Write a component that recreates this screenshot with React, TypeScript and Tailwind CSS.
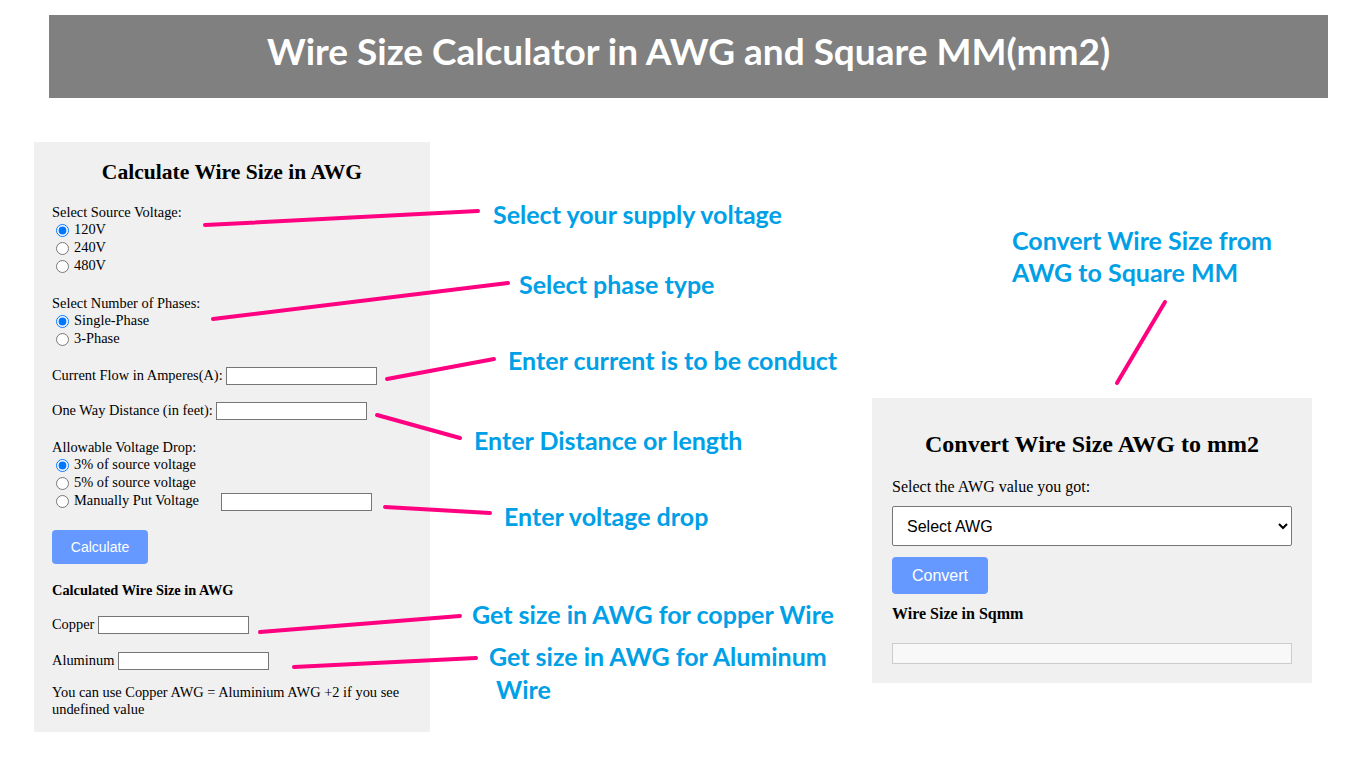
import React from 'react';

const serif = { fontFamily: '"Liberation Serif", "Times New Roman", serif' };

// annotation overlay: pink pointer lines
const pointers: [number, number, number, number][] = [
  [205, 225, 478, 211],
  [213, 319, 508, 283],
  [387, 379, 494, 359],
  [377, 415, 460, 438],
  [385, 507, 490, 513],
  [260, 632, 460, 616],
  [294, 667, 476, 658],
  [1117, 383, 1165, 302],
];

const notes: { text: string; left: number; top: number }[] = [
  { text: 'Select your supply voltage', left: 493, top: 199 },
  { text: 'Select phase type', left: 519, top: 269 },
  { text: 'Enter current is to be conduct', left: 508, top: 345 },
  { text: 'Enter Distance or length', left: 474, top: 425 },
  { text: 'Enter voltage drop', left: 504, top: 501 },
  { text: 'Get size in AWG for copper Wire', left: 472, top: 599 },
  { text: 'Get size in AWG for Aluminum', left: 489, top: 641 },
  { text: 'Wire', left: 496, top: 674 },
  { text: 'Convert Wire Size from', left: 1012, top: 225 },
  { text: 'AWG to Square MM', left: 1012, top: 257 },
];

function Radio({ label, checked, name }: { label: string; checked?: boolean; name: string }) {
  return (
    <label className="flex items-center h-[18px]">
      <input type="radio" name={name} defaultChecked={checked} className="m-0 ml-[4px] mr-[5px] w-[13px] h-[13px]" />
      <span>{label}</span>
    </label>
  );
}

function TextBox({ className = '' }: { className?: string }) {
  return <input type="text" className={`w-[151px] h-[18px] border border-[#767676] bg-white ${className}`} />;
}

export default function App() {
  return (
    <div className="relative w-full h-[768px] bg-white overflow-hidden">
      {/* 标题栏 */}
      <header className="ml-[49px] mt-[15px] w-[1279px] h-[83px] bg-[#808080] flex items-center justify-center pb-[12px]">
        <h1
          className="text-white font-bold text-[37px] leading-none"
          style={{ fontFamily: 'Lato, "Open Sans", sans-serif' }}
        >
          Wire Size Calculator in AWG and Square MM(mm2)
        </h1>
      </header>

      <main className="flex justify-between items-start pl-[34px] pr-[54px] mt-[44px]" style={serif}>
        {/* 左侧：计算 AWG */}
        <section className="w-[396px] bg-[#f0f0f0] pl-[18px] pr-[18px] pt-[18px] pb-[14px] text-[14.4px] text-black">
          <h2 className="text-center font-bold text-[21.6px] leading-[25px]">Calculate Wire Size in AWG</h2>

          <div className="mt-[18px] leading-[18px]">Select Source Voltage:</div>
          <Radio name="v" label="120V" checked />
          <Radio name="v" label="240V" />
          <Radio name="v" label="480V" />

          <div className="mt-[19px] leading-[18px]">Select Number of Phases:</div>
          <Radio name="p" label="Single-Phase" checked />
          <Radio name="p" label="3-Phase" />

          <div className="mt-[19px] flex items-center h-[18px]">
            <span>Current Flow in Amperes(A):</span>
            <TextBox className="ml-[3px]" />
          </div>

          <div className="mt-[17px] flex items-center h-[18px]">
            <span>One Way Distance (in feet):</span>
            <TextBox className="ml-[3px]" />
          </div>

          <div className="mt-[18px] leading-[18px]">Allowable Voltage Drop:</div>
          <Radio name="d" label="3% of source voltage" checked />
          <Radio name="d" label="5% of source voltage" />
          <label className="flex items-center h-[18px]">
            <input type="radio" name="d" className="m-0 ml-[4px] mr-[5px] w-[13px] h-[13px]" />
            <span>Manually Put Voltage</span>
            <TextBox className="ml-[22px] mt-[2px]" />
          </label>

          <button
            className="mt-[20px] w-[96px] h-[34px] rounded-[4px] bg-[#6699ff] text-white text-[14px]"
            style={{ fontFamily: '"Liberation Sans", Arial, sans-serif' }}
          >
            Calculate
          </button>

          <div className="mt-[17px] font-bold leading-[18px]">Calculated Wire Size in AWG</div>

          <div className="mt-[17px] flex items-center h-[18px]">
            <span>Copper</span>
            <TextBox className="ml-[4px]" />
          </div>
          <div className="mt-[18px] flex items-center h-[18px]">
            <span>Aluminum</span>
            <TextBox className="ml-[4px]" />
          </div>

          <p className="mt-[14px] leading-[17px]">
            You can use Copper AWG = Aluminium AWG +2 if you see undefined value
          </p>
        </section>

        {/* 右侧：AWG 转 mm2 */}
        <section className="mt-[256px] w-[440px] bg-[#f0f0f0] px-[20px] pt-[32px] pb-[19px] text-[16px] text-black">
          <h2 className="text-center font-bold text-[24px] leading-[28px]">Convert Wire Size AWG to mm2</h2>
          <div className="mt-[20px] leading-[18px]">Select the AWG value you got:</div>
          <select
            className="mt-[10px] w-full h-[40px] border border-[#767676] rounded-[2px] bg-white pl-[10px] text-[16px]"
            style={{ fontFamily: '"Liberation Sans", Arial, sans-serif' }}
            defaultValue=""
          >
            <option value="">Select AWG</option>
          </select>
          <button
            className="mt-[11px] block w-[96px] h-[37px] rounded-[4px] bg-[#6699ff] text-white text-[16px]"
            style={{ fontFamily: '"Liberation Sans", Arial, sans-serif' }}
          >
            Convert
          </button>
          <div className="mt-[11px] font-bold leading-[18px]">Wire Size in Sqmm</div>
          <div className="mt-[20px] h-[21px] w-full border border-[#cccccc] bg-[#f8f8f8]"></div>
        </section>
      </main>

      {/* 标注层 */}
      <svg className="absolute inset-0 pointer-events-none" width="1366" height="768">
        {pointers.map(([x1, y1, x2, y2], i) => (
          <line key={i} x1={x1} y1={y1} x2={x2} y2={y2} stroke="#ff0080" strokeWidth={4} strokeLinecap="round" />
        ))}
      </svg>
      {notes.map((n) => (
        <div
          key={n.text + n.top}
          className="absolute text-[25px] leading-[30px] font-bold text-[#00a0e6] whitespace-nowrap"
          style={{ left: n.left, top: n.top, fontFamily: 'Lato, "Open Sans", sans-serif' }}
        >
          {n.text}
        </div>
      ))}
    </div>
  );
}
